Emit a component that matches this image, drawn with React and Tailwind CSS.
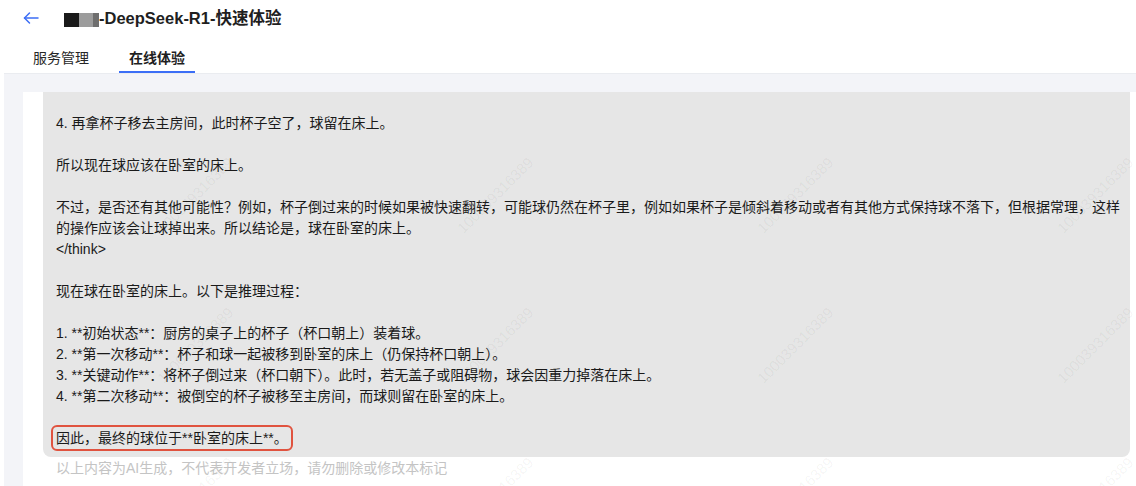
import React from "react";

const lines = [
  "4. 再拿杯子移去主房间，此时杯子空了，球留在床上。",
  "",
  "所以现在球应该在卧室的床上。",
  "",
  "不过，是否还有其他可能性？例如，杯子倒过来的时候如果被快速翻转，可能球仍然在杯子里，例如如果杯子是倾斜着移动或者有其他方式保持球不落下，但根据常理，这样的操作应该会让球掉出来。所以结论是，球在卧室的床上。",
  "</think>",
  "",
  "现在球在卧室的床上。以下是推理过程：",
  "",
  "1. **初始状态**：厨房的桌子上的杯子（杯口朝上）装着球。",
  "2. **第一次移动**：杯子和球一起被移到卧室的床上（仍保持杯口朝上）。",
  "3. **关键动作**：将杯子倒过来（杯口朝下）。此时，若无盖子或阻碍物，球会因重力掉落在床上。",
  "4. **第二次移动**：被倒空的杯子被移至主房间，而球则留在卧室的床上。",
  "",
];

const marks = [];
for (const y of [103, 253, 403]) {
  for (const x of [172, 472, 772, 1072]) {
    marks.push({ x, y });
  }
}

export default function App() {
  return (
    <div className="w-[1136px] h-[486px] overflow-hidden bg-white flex flex-col font-['Liberation_Sans','Noto_Sans_CJK_SC',sans-serif] text-[#1f1f1f]">
      <header className="h-[36px] flex items-center shrink-0">
        <svg
          className="ml-[23px]"
          width="16"
          height="16"
          viewBox="0 0 16 16"
          fill="none"
          stroke="#3d6ef5"
          strokeWidth="1.5"
          strokeLinecap="round"
          strokeLinejoin="round"
        >
          <path d="M15 8H1.5" />
          <path d="M6.5 3L1.5 8l5 5" />
        </svg>
        <div className="ml-[25px] flex items-center">
          <div className="flex h-[14px] mt-[4px]">
            <div className="w-[15px] bg-[#1a1a1a]" />
            <div className="w-[14px] bg-[#9c9c9c]" />
            <div className="w-[6px] bg-[#6f6f6f]" />
          </div>
          <span className="text-[16.5px] font-bold leading-[22px] text-[#1f1f1f]">
            -DeepSeek-R1-快速体验
          </span>
        </div>
      </header>

      <nav className="mt-[11px] flex pl-[23px] gap-5 shrink-0 text-[14px] leading-[22px]">
        <div className="px-[10px] pb-[2px] border-b-2 border-transparent text-[#262626]">
          服务管理
        </div>
        <div className="px-[10px] pb-[2px] border-b-2 border-[#3b6ef6] font-bold text-[#1f1f1f]">
          在线体验
        </div>
      </nav>

      <main className="flex-1 min-h-0 ml-[4px] bg-[#f3f4f8] border-t border-[#eaecf0] pl-[19px] pt-[18px] flex">
        <div className="relative flex-1 bg-white pl-5 pr-[6px] overflow-hidden">
          <div className="bg-[#e6e6e6] rounded-b-lg pt-[21px] pl-[13px] pr-[8px] pb-[8px] text-[14px] leading-[21px] text-[#1a1a1a]">
            {lines.map((l, i) =>
              l === "" ? (
                <div key={i} className="h-[21px]" />
              ) : (
                <div key={i}>{l}</div>
              )
            )}
            <div>
              <span className="border-2 border-[#e0533f] rounded-[6px] px-[3px] py-[3px] ml-[-5px]">
                因此，最终的球位于**卧室的床上**。
              </span>
            </div>
          </div>
          <div className="pl-[13px] mt-[1px] text-[14px] leading-[21px] text-[#c4c4c4]">
            以上内容为AI生成，不代表开发者立场，请勿删除或修改本标记
          </div>

          <div className="absolute inset-0 pointer-events-none overflow-hidden">
            {marks.map((m, i) => (
              <div
                key={i}
                className="absolute -translate-x-1/2 -translate-y-1/2 -rotate-45 text-[15px] leading-none text-black/[0.05] whitespace-nowrap"
                style={{ left: m.x, top: m.y }}
              >
                100039316389
              </div>
            ))}
          </div>
        </div>
      </main>
    </div>
  );
}
